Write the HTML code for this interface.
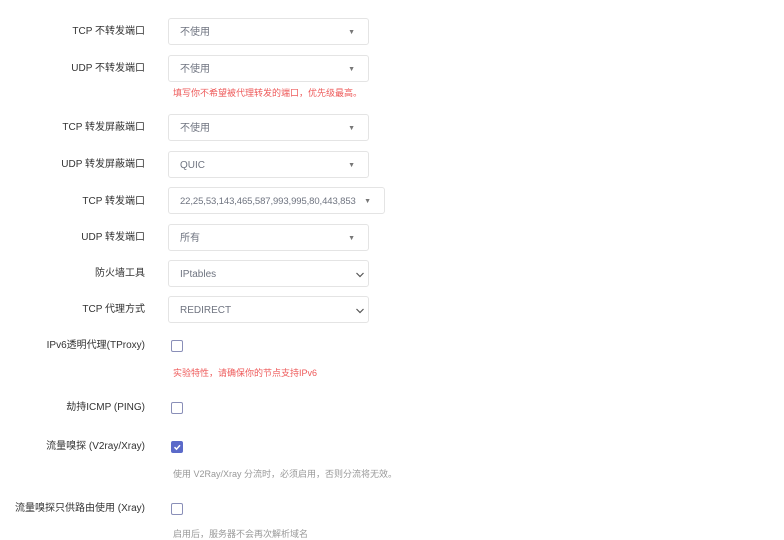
<!DOCTYPE html><html><head><meta charset="utf-8"><style>
body{margin:0;width:784px;height:536px;background:#fff;overflow:hidden;font-family:"Liberation Sans","Noto Sans CJK SC",sans-serif;font-size:10px;color:#333;position:relative}
.l{position:absolute;right:639px;white-space:nowrap;line-height:14px;margin-top:1px}
.s{position:absolute;left:168px;width:199px;height:25px;border:1px solid #e4e4e4;border-radius:3px;color:#6f7480;line-height:27px;font-size:10px}
.s span{position:absolute;left:11px;top:0}
.s i{position:absolute;right:13px;top:0;font-style:normal;font-size:7px;color:#777}
.s svg{position:absolute;right:3px;top:10px}
.h{position:absolute;left:173px;white-space:nowrap;font-size:9px;line-height:12px}
.r{color:#ee5a5a}.g{color:#999}
.c{position:absolute;left:171px;width:10px;height:10px;border:1px solid #8a8fb8;border-radius:2px}
.c.on{background:#5b6ac9;border-color:#5b6ac9}
</style></head><body>
<div class="l" style="top:24px">TCP 不转发端口</div>
<div class="s" style="top:18px"><span>不使用</span><i>▼</i></div>
<div class="l" style="top:61px">UDP 不转发端口</div>
<div class="s" style="top:55px"><span>不使用</span><i>▼</i></div>
<div class="h r" style="top:87px">填写你不希望被代理转发的端口，优先级最高。</div>
<div class="l" style="top:120px">TCP 转发屏蔽端口</div>
<div class="s" style="top:114px"><span>不使用</span><i>▼</i></div>
<div class="l" style="top:157px">UDP 转发屏蔽端口</div>
<div class="s" style="top:151px"><span>QUIC</span><i>▼</i></div>
<div class="l" style="top:194px">TCP 转发端口</div>
<div class="s" style="top:187px;width:215px"><span style="font-size:9.5px;letter-spacing:-0.1px">22,25,53,143,465,587,993,995,80,443,853</span><i>▼</i></div>
<div class="l" style="top:230px">UDP 转发端口</div>
<div class="s" style="top:224px"><span>所有</span><i>▼</i></div>
<div class="l" style="top:266px">防火墙工具</div>
<div class="s" style="top:260px"><span>IPtables</span><svg width="10" height="8"><path d="M1.5 2l3.5 3.5 3.5-3.5" stroke="#555" stroke-width="1.2" fill="none"/></svg></div>
<div class="l" style="top:302px">TCP 代理方式</div>
<div class="s" style="top:296px"><span>REDIRECT</span><svg width="10" height="8"><path d="M1.5 2l3.5 3.5 3.5-3.5" stroke="#555" stroke-width="1.2" fill="none"/></svg></div>
<div class="l" style="top:338px">IPv6透明代理(TProxy)</div>
<div class="c" style="top:340px"></div>
<div class="h r" style="top:367px">实验特性，请确保你的节点支持IPv6</div>
<div class="l" style="top:400px">劫持ICMP (PING)</div>
<div class="c" style="top:402px"></div>
<div class="l" style="top:439px">流量嗅探 (V2ray/Xray)</div>
<div class="c on" style="top:441px"><svg width="10" height="10"><path d="M2.5 5.2l2 2 3.5-4" stroke="#fff" stroke-width="1.5" fill="none"/></svg></div>
<div class="h g" style="top:468px">使用 V2Ray/Xray 分流时，必须启用，否则分流将无效。</div>
<div class="l" style="top:501px">流量嗅探只供路由使用 (Xray)</div>
<div class="c" style="top:503px"></div>
<div class="h g" style="top:528px">启用后，服务器不会再次解析域名</div>
</body></html>
